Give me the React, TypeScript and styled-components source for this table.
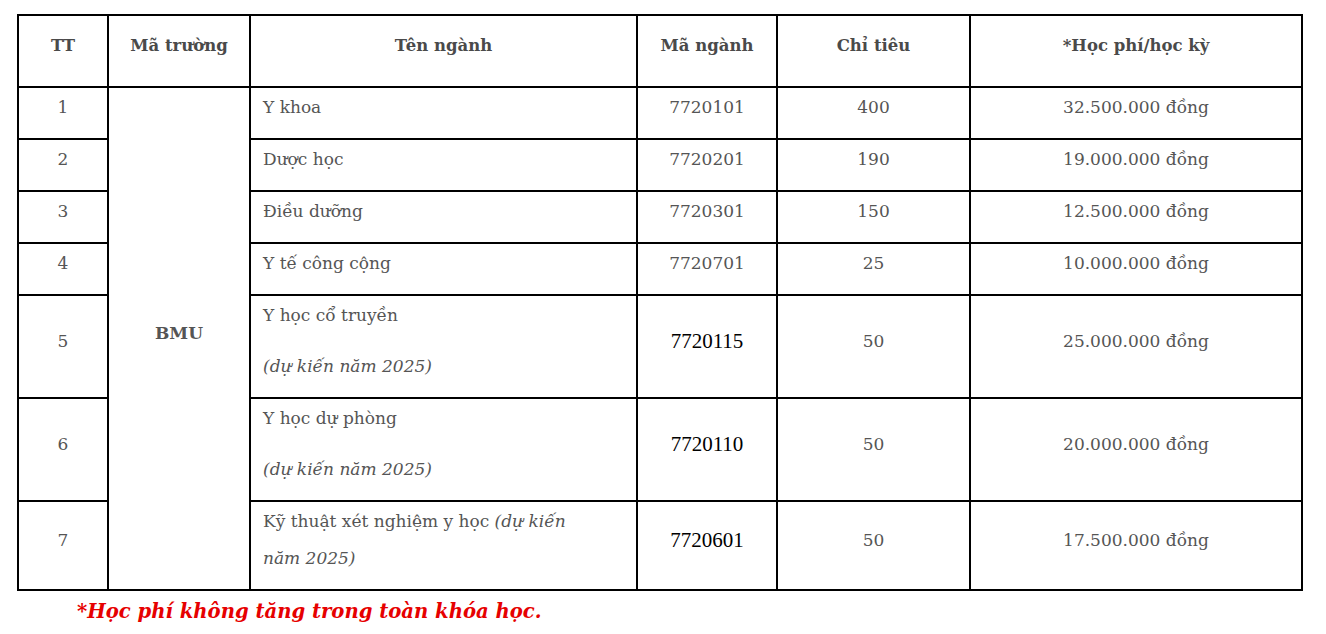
import React from 'react';
import styled, { createGlobalStyle } from 'styled-components';

const GlobalStyle = createGlobalStyle`
  html, body {
    margin: 0;
    padding: 0;
    background: #ffffff;
  }
  body {
    font-family: "DejaVu Serif", "Liberation Serif", serif;
  }
`;

const Page = styled.div`
  padding: 14px 0 0 17px;
  width: 1326px;
  box-sizing: border-box;
`;

const Table = styled.table`
  border-collapse: collapse;
  table-layout: fixed;
  width: 1284px;
  color: #555555;
  font-size: 17px;
`;

const Th = styled.th<{ $w: number }>`
  width: ${(p) => p.$w}px;
  box-sizing: border-box;
  border: 2px solid #000;
  padding: 11px 10px 10px;
  font-weight: bold;
  font-size: 16.5px;
  color: #4a4a4a;
  text-align: center;
  vertical-align: middle;
`;

const Td = styled.td<{ $left?: boolean; $bold?: boolean }>`
  border: 2px solid #000;
  padding: ${(p) => (p.$left ? '1px 40px 0 12px' : '1px 10px 0')};
  text-align: ${(p) => (p.$left ? 'left' : 'center')};
  vertical-align: middle;
  font-weight: ${(p) => (p.$bold ? 'bold' : 'normal')};
`;

const P = styled.p`
  margin: 0 0 12px;
  line-height: 37px;
`;

// second paragraph of a cell: slightly larger gap above it
const NoteLine = styled(P)`
  margin-top: 14px;
  font-style: italic;
`;

const Note = styled.em`
  font-style: italic;
`;

const Code = styled.span`
  display: block;
  font-family: "Liberation Serif", "Times New Roman", serif;
  font-size: 21px;
  color: #000;
  line-height: 37px;
  margin-bottom: 12px;
`;

const Caption = styled.p`
  margin: 6px 0 0 60px;
  font-family: "DejaVu Serif", serif;
  font-weight: bold;
  font-style: italic;
  font-size: 19.6px;
  color: #e60000;
  line-height: 30px;
`;

type Row = {
  tt: string;
  name: React.ReactNode;
  code: string;
  black?: boolean;
  quota: string;
  fee: string;
};

const rows: Row[] = [
  { tt: '1', name: <P>Y khoa</P>, code: '7720101', quota: '400', fee: '32.500.000 đồng' },
  { tt: '2', name: <P>Dược học</P>, code: '7720201', quota: '190', fee: '19.000.000 đồng' },
  { tt: '3', name: <P>Điều dưỡng</P>, code: '7720301', quota: '150', fee: '12.500.000 đồng' },
  { tt: '4', name: <P>Y tế công cộng</P>, code: '7720701', quota: '25', fee: '10.000.000 đồng' },
  {
    tt: '5',
    name: (
      <>
        <P>Y học cổ truyền</P>
        <NoteLine>(dự kiến năm 2025)</NoteLine>
      </>
    ),
    code: '7720115',
    black: true,
    quota: '50',
    fee: '25.000.000 đồng',
  },
  {
    tt: '6',
    name: (
      <>
        <P>Y học dự phòng</P>
        <NoteLine>(dự kiến năm 2025)</NoteLine>
      </>
    ),
    code: '7720110',
    black: true,
    quota: '50',
    fee: '20.000.000 đồng',
  },
  {
    tt: '7',
    name: (
      <P>
        Kỹ thuật xét nghiệm y học <Note>(dự kiến năm 2025)</Note>
      </P>
    ),
    code: '7720601',
    black: true,
    quota: '50',
    fee: '17.500.000 đồng',
  },
];

export default function App() {
  return (
    <>
      <GlobalStyle />
      <Page>
        <Table>
          <thead>
            <tr>
              <Th $w={90}><P>TT</P></Th>
              <Th $w={142}><P>Mã trường</P></Th>
              <Th $w={387}><P>Tên ngành</P></Th>
              <Th $w={140}><P>Mã ngành</P></Th>
              <Th $w={193}><P>Chỉ tiêu</P></Th>
              <Th $w={332}><P>*Học phí/học kỳ</P></Th>
            </tr>
          </thead>
          <tbody>
            {rows.map((r, i) => (
              <tr key={r.tt}>
                <Td><P>{r.tt}</P></Td>
                {i === 0 && (
                  <Td rowSpan={rows.length} $bold>
                    <P>BMU</P>
                  </Td>
                )}
                <Td $left>{r.name}</Td>
                <Td>{r.black ? <Code>{r.code}</Code> : <P>{r.code}</P>}</Td>
                <Td><P>{r.quota}</P></Td>
                <Td><P>{r.fee}</P></Td>
              </tr>
            ))}
          </tbody>
        </Table>
        <Caption>*Học phí không tăng trong toàn khóa học.</Caption>
      </Page>
    </>
  );
}
